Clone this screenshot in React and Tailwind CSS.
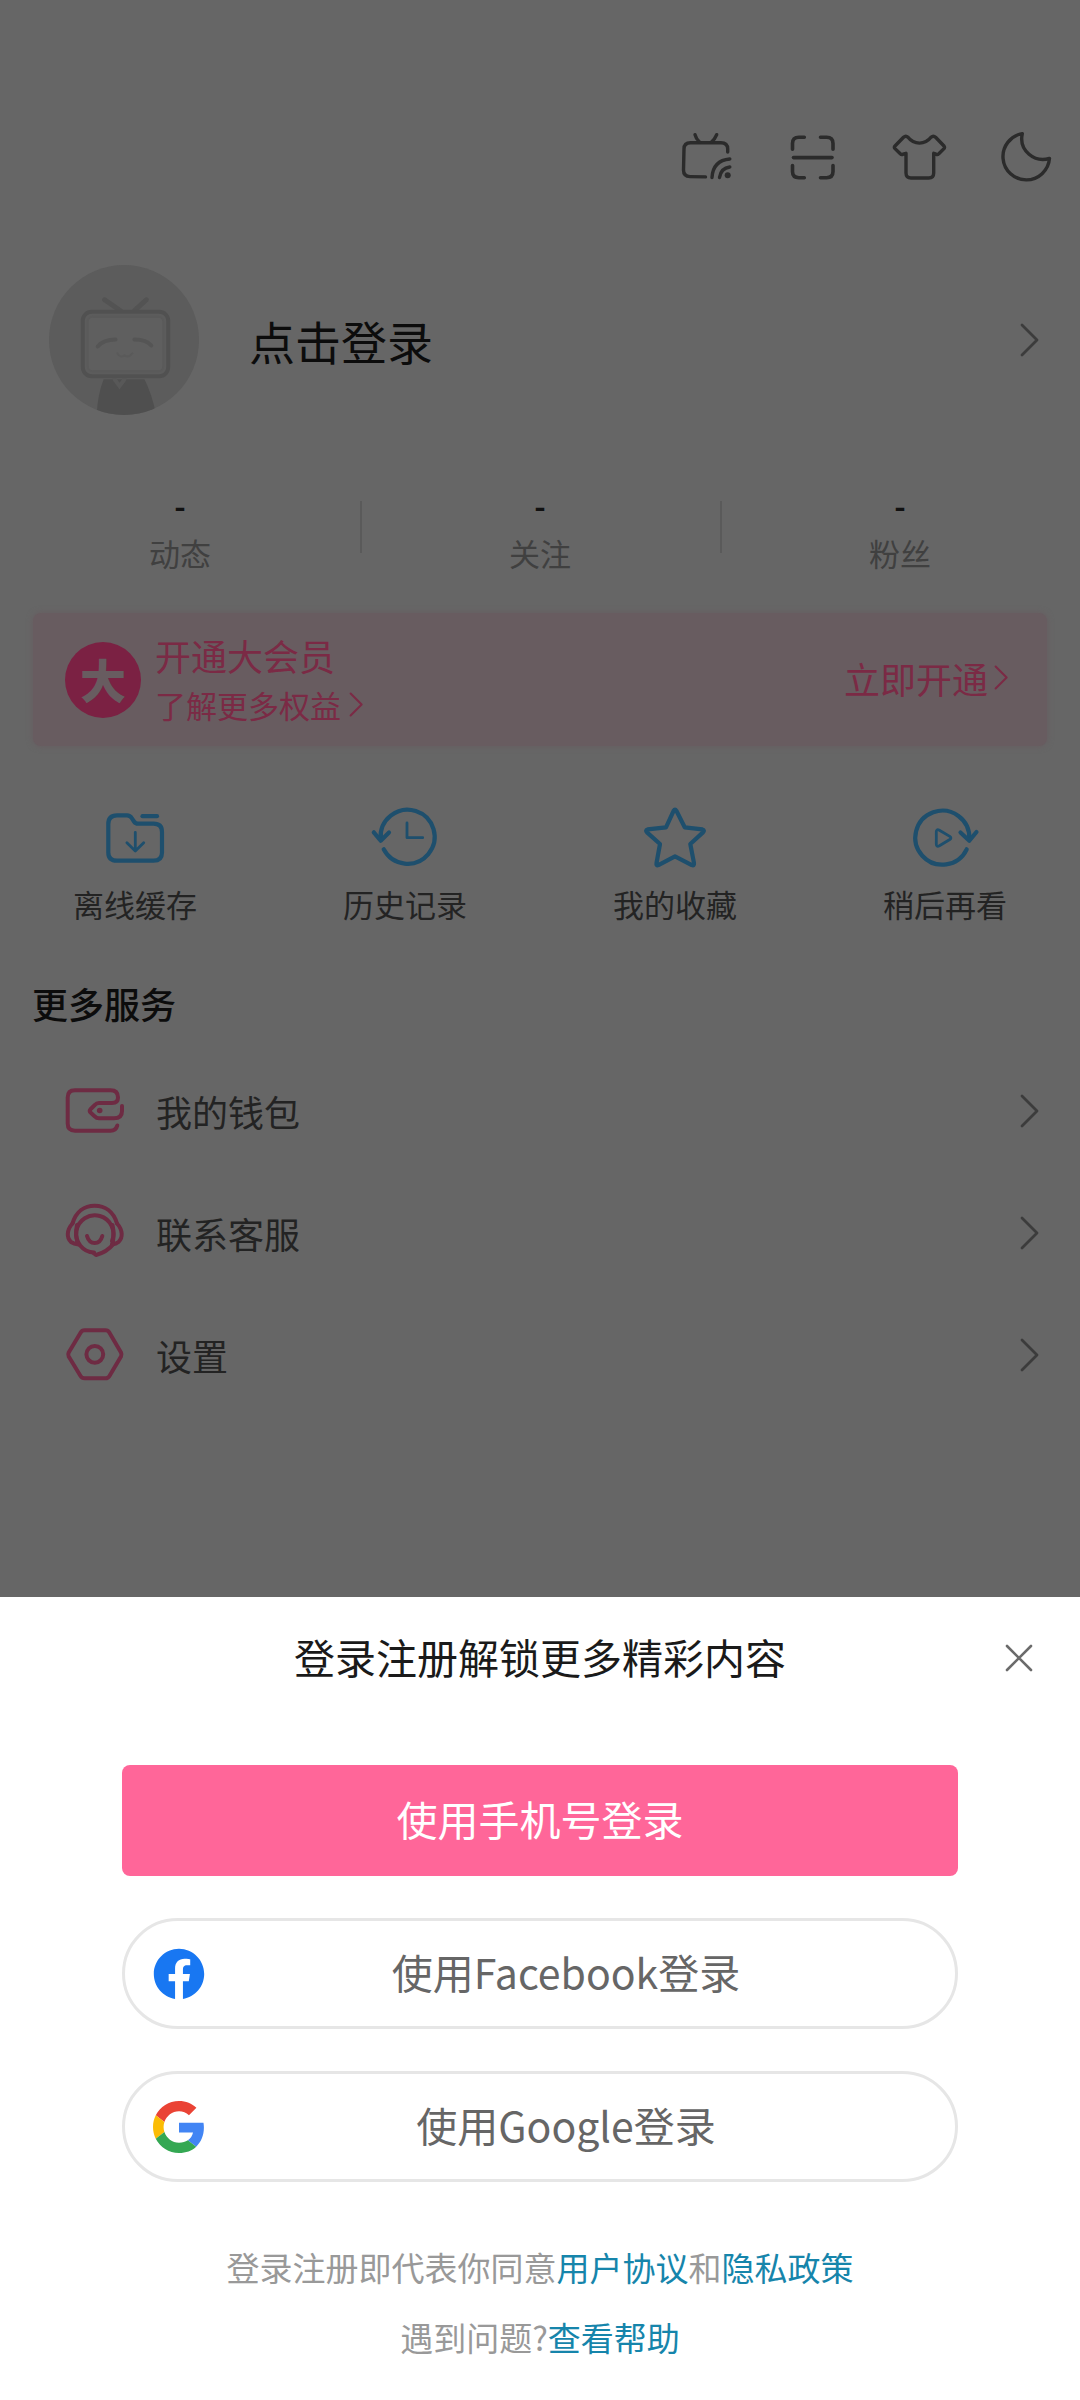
import React from 'react';
import { FaFacebook } from 'react-icons/fa';

const TvCastIcon = () => (
    <svg className="w-14 h-14" viewBox="0 0 56 56" fill="none" stroke="currentColor" strokeWidth="3.4" strokeLinecap="round" strokeLinejoin="round">
        <path d="M48.7 23V20Q48.7 13.7 42 13.7H11.5Q5 13.7 5 20L4.5 41Q4.5 47.4 11 47.6L26.5 47.9" />
        <path d="M16 5.7Q17 10 20.5 13M37.7 5.7Q36 10 32.5 13" />
        <path d="M50.8 30Q34 31.5 33 48.5M50.8 38Q42 39 40.5 48.5" />
        <circle cx="48.7" cy="46.3" r="3" fill="currentColor" stroke="none" />
    </svg>
);

const ScanIcon = () => (
    <svg className="w-14 h-14" viewBox="0 0 56 56" fill="none" stroke="currentColor" strokeWidth="3.6" strokeLinecap="round">
        <path d="M19.3 8.3H14Q7.5 8.3 7.5 14.5V20.3M35.5 8.3H41.5Q48 8.3 48 14.5V20.3" />
        <path d="M19.3 48.7H14Q7.5 48.7 7.5 42.5V36.5M35.5 48.7H41.5Q48 48.7 48 42.5V36.5" />
        <path d="M8.5 28.6H47" />
    </svg>
);

const ShirtIcon = () => (
    <svg className="w-14 h-14" viewBox="0 0 56 56" fill="none" stroke="currentColor" strokeWidth="3.4" strokeLinecap="round" strokeLinejoin="round">
        <path d="M12.5 8.3Q14.8 6.2 17 8.3C23 16 34 16 40 8.3Q42.3 6.2 44.6 8.3L53 17Q54 18.3 53 19.6L47.8 24.8Q46.5 26 45 25.2L42.7 24.3V44Q42.7 49 37.7 49H20Q15 49 15 44V24.3L12 25.2Q10.5 26 9.3 24.8L4 19.6Q2.8 18.3 4 17Z" />
    </svg>
);

const MoonIcon = () => (
    <svg className="w-14 h-14" viewBox="0 0 56 56" fill="none" stroke="currentColor" strokeWidth="3.4" strokeLinejoin="round">
        <path d="M25.3 4.6A23.3 23.3 0 1 0 52.5 29.4C38 34 21.5 22 25.3 4.6Z" />
    </svg>
);

const Avatar = () => (
    <svg className="w-[150px] h-[150px] rounded-full bg-[#5c5c5c]" viewBox="0 0 151 151" fill="none" strokeLinecap="round">
        <path d="M55 115Q49 130 48 151H108Q103 128 96 115Z" fill="#4f4f4f" />
        <path d="M66 115L71 122L76 115" stroke="#585858" strokeWidth="4" />
        <path d="M56 35L72 46M98 35L86 46" stroke="#535353" strokeWidth="5" />
        <rect x="34" y="47" width="86" height="65" rx="9" fill="#5c5c5c" stroke="#515151" strokeWidth="4" />
        <rect x="39" y="52" width="76" height="55" rx="5" fill="#5f5f5f" stroke="#5a5a5a" strokeWidth="2" />
        <path d="M49 82Q55 75 67 75M86 75Q98 75 103 81" stroke="#555555" strokeWidth="4" />
        <path d="M69 89Q72 94 76 91Q80 94 84 89" stroke="#5a5a5a" strokeWidth="2" />
    </svg>
);

const FolderIcon = () => (
    <svg className="w-16 h-16" viewBox="0 0 64 64" fill="none" stroke="currentColor" strokeWidth="4.2" strokeLinecap="round" strokeLinejoin="round">
        <path d="M14 9.3H24Q27 9.3 28.7 12L31 15.5Q32.5 17.7 35 17.7H50.5Q59 17.7 59 26V46.5Q59 54.7 50.5 54.7H14Q5.3 54.7 5.3 46.5V18Q5.3 9.3 14 9.3Z" />
        <path d="M39.5 10.2H54" />
        <path d="M32.3 26.3V44.5M23.9 36.7L32.3 45L40.7 36.7" strokeWidth="2.8" />
    </svg>
);

const HistoryIcon = () => (
    <svg className="w-16 h-16 overflow-visible" viewBox="0 0 64 64" fill="none" stroke="currentColor" strokeWidth="4.2" strokeLinecap="round" strokeLinejoin="round">
        <path d="M7.7 33A27 27 0 1 1 10.7 43.3" />
        <path d="M0.8 26.3L7.7 34.7L16 26.5" />
        <path d="M34 17V31.7H49.7" strokeWidth="2.8" />
    </svg>
);

const StarIcon = () => (
    <svg className="w-16 h-16" viewBox="0 0 64 64" fill="none" stroke="currentColor" strokeWidth="4.2" strokeLinejoin="round">
        <path d="M30.6 4.8Q32 2.4 33.4 4.8L41.7 21.3L59.4 23.4Q62 24.2 60 26.4L47.3 38L51 57.2Q51.3 60 48.8 59.1L32 50.3L15.4 59.1Q13 60 13.5 57.2L17 38L4 26.4Q2 24.2 4.6 23.4L23 21.3Z" />
    </svg>
);

const WatchLaterIcon = () => (
    <svg className="w-16 h-16 overflow-visible" viewBox="0 0 64 64" fill="none" stroke="currentColor" strokeWidth="4.2" strokeLinecap="round" strokeLinejoin="round">
        <path d="M56.3 33A27 27 0 1 0 53.7 43.3" />
        <path d="M47.5 26.5L56.3 34.7L63.5 26" />
        <path d="M23.3 26Q23.3 22.6 26.4 24.2L36.8 30.4Q39 32 36.8 33.5L26.4 39.8Q23.3 41.4 23.3 38Z" strokeWidth="2.8" />
    </svg>
);

const WalletIcon = () => (
    <svg className="w-[60px] h-[60px]" viewBox="0 0 60 60" fill="none" stroke="currentColor" strokeWidth="4" strokeLinecap="round" strokeLinejoin="round">
        <path d="M52.3 44.5Q51 49.7 45.5 49.7H10Q2.7 49.7 2.7 42.5V16.5Q2.7 9.3 10 9.3H45.5Q53 9.3 53 16.5Q53 22 47 22H34Q31.5 22 29.8 24L25.5 28.2Q24 30 25.5 31.6L29.8 35.4Q31.5 37.3 34 37.3H49Q57 37.3 57 30V25" />
        <circle cx="34.7" cy="29.5" r="2.8" fill="currentColor" stroke="none" />
    </svg>
);

const SupportIcon = () => (
    <svg className="w-[60px] h-[60px]" viewBox="0 0 60 60" fill="none" stroke="currentColor" strokeWidth="4" strokeLinecap="round" strokeLinejoin="round">
        <path d="M29 49.5A18.6 18.6 0 1 1 47 38" />
        <path d="M7.5 20.5C11 8.5 19.5 2.7 29.7 2.7S48.5 8.5 52 20.5" />
        <path d="M7.5 20.5C1.5 27 1.5 35 6 39Q9 41 13.5 41.5Q9.5 33 12 22" />
        <path d="M52 20.5C58 27 58 35 53.5 39Q51 41 47 41.5Q50 33 47.5 22" />
        <path d="M48 41.5Q42 49 31 52L28.5 50" />
        <path d="M22 33Q24 40 29.7 40T37.3 33" />
    </svg>
);

const SettingsIcon = () => (
    <svg className="w-[60px] h-[60px]" viewBox="0 0 60 60" fill="none" stroke="currentColor" strokeWidth="4" strokeLinejoin="round">
        <path d="M19.5 5.3H40.5Q43 5.3 44.3 7.5L56 27.5Q57 29.5 56 31.5L44.3 51.2Q43 53.3 40.5 53.3H19.5Q17 53.3 15.7 51.2L3.7 31.5Q2.7 29.5 3.7 27.5L15.7 7.5Q17 5.3 19.5 5.3Z" />
        <circle cx="29.8" cy="29.3" r="8.4" />
    </svg>
);

const Chevron = ({ className }) => (
    <svg className={className} viewBox="0 0 20 34" fill="none" stroke="currentColor" strokeWidth="2.8" strokeLinecap="round" strokeLinejoin="round">
        <path d="M2 2L17 17L2 32" />
    </svg>
);

const GoogleIcon = () => (
    <svg className="w-[52px] h-[52px] shrink-0" viewBox="0 0 48 48">
        <path fill="#EA4335" d="M24 9.5c3.54 0 6.71 1.22 9.21 3.6l6.85-6.85C35.9 2.38 30.47 0 24 0 14.62 0 6.51 5.38 2.56 13.22l7.98 6.19C12.43 13.72 17.74 9.5 24 9.5z" />
        <path fill="#4285F4" d="M46.98 24.55c0-1.57-.15-3.09-.38-4.55H24v9.02h12.94c-.58 2.96-2.26 5.48-4.78 7.18l7.73 6c4.51-4.18 7.09-10.36 7.09-17.65z" />
        <path fill="#FBBC05" d="M10.53 28.59c-.48-1.45-.76-2.99-.76-4.59s.27-3.14.76-4.59l-7.98-6.19C.92 16.46 0 20.12 0 24c0 3.88.92 7.54 2.56 10.78l7.97-6.19z" />
        <path fill="#34A853" d="M24 48c6.48 0 11.93-2.13 15.89-5.81l-7.73-6c-2.15 1.45-4.92 2.3-8.16 2.3-6.26 0-11.57-4.22-13.47-9.91l-7.98 6.19C6.51 42.62 14.62 48 24 48z" />
    </svg>
);

const topActions = [
    { label: '投屏', Icon: TvCastIcon },
    { label: '扫一扫', Icon: ScanIcon },
    { label: '主题', Icon: ShirtIcon },
    { label: '夜间模式', Icon: MoonIcon }
];

const stats = ['动态', '关注', '粉丝'];

const shortcuts = [
    { label: '离线缓存', Icon: FolderIcon },
    { label: '历史记录', Icon: HistoryIcon },
    { label: '我的收藏', Icon: StarIcon },
    { label: '稍后再看', Icon: WatchLaterIcon }
];

const services = [
    { label: '我的钱包', Icon: WalletIcon },
    { label: '联系客服', Icon: SupportIcon },
    { label: '设置', Icon: SettingsIcon }
];

const App = () => {
    return (
        <div className="min-h-screen flex flex-col bg-[#666666] font-['Noto_Sans_CJK_SC',sans-serif]">
            <main className="flex-1 pb-40">
                {/* Top actions */}
                <header className="flex justify-end gap-[50px] pt-[129px] pr-[27px] text-[#2b2b2b]">
                    {topActions.map(({ label, Icon }) => (
                        <button key={label} type="button" aria-label={label}>
                            <Icon />
                        </button>
                    ))}
                </header>

                {/* Profile */}
                <button type="button" className="mt-20 w-full flex items-center pl-[49px] pr-10 text-left">
                    <Avatar />
                    <span className="flex-1 ml-[50px] text-[46px] leading-[60px] text-[#0c0c0c]">点击登录</span>
                    <Chevron className="w-5 h-[34px] text-[#3c3c3c]" />
                </button>

                {/* Stats */}
                <div className="mt-[66px] grid grid-cols-3">
                    {stats.map((label, i) => (
                        <button key={label} type="button" className="relative flex flex-col items-center">
                            <span className="text-[31px] leading-[48px] font-bold text-[#111111]">-</span>
                            <span className="text-[31px] leading-[48px] text-[#404040]">{label}</span>
                            {i > 0 && <span className="absolute left-0 top-5 w-0.5 h-[52px] bg-[#5a5a5a]" />}
                        </button>
                    ))}
                </div>

                {/* VIP banner */}
                <div className="mt-9 mx-[33px] h-[133px] flex items-center pl-8 pr-[38px] rounded-lg bg-[#685c60] shadow-[0_0_6px_#685c60] text-[#7b2a45]">
                    <div className="w-[76px] h-[76px] pb-1 rounded-full bg-[#7b2143] flex items-center justify-center text-[46px] leading-[46px] font-black text-[#685c60]">
                        大
                    </div>
                    <div className="flex-1 ml-[14px] pb-0.5">
                        <div className="text-[36px] leading-[52px]">开通大会员</div>
                        <a href="#" className="flex items-center gap-2 text-[31px] leading-[48px]">
                            了解更多权益
                            <Chevron className="w-[15px] h-[25px]" />
                        </a>
                    </div>
                    <button type="button" className="flex items-center gap-1.5 pb-1 text-[36px] leading-[52px]">
                        立即开通
                        <Chevron className="w-[15px] h-[25px]" />
                    </button>
                </div>

                {/* Shortcuts */}
                <nav className="mt-[60px] grid grid-cols-4">
                    {shortcuts.map(({ label, Icon }) => (
                        <button key={label} type="button" className="flex flex-col items-center gap-3 text-[#1e4f6d]">
                            <Icon />
                            <span className="text-[31px] leading-[44px] text-[#232323]">{label}</span>
                        </button>
                    ))}
                </nav>

                {/* More services */}
                <h2 className="mt-[50px] px-8 text-[36px] leading-[54px] font-medium text-[#0c0c0c]">更多服务</h2>
                <ul className="mt-5">
                    {services.map(({ label, Icon }) => (
                        <li key={label}>
                            <button type="button" className="w-full h-[122px] flex items-center pl-[65px] pr-10 text-left text-[#6e2b43]">
                                <Icon />
                                <span className="flex-1 ml-[31px] text-[36px] leading-[54px] text-[#232323]">{label}</span>
                                <Chevron className="w-5 h-[34px] text-[#3c3c3c]" />
                            </button>
                        </li>
                    ))}
                </ul>
            </main>

            {/* Login sheet */}
            <section className="bg-white pb-[38px]">
                <div className="relative h-[122px] pb-1 flex items-center justify-center">
                    <h1 className="text-[41px] leading-[60px] text-[#1a1a1a]">登录注册解锁更多精彩内容</h1>
                    <button type="button" aria-label="关闭" className="absolute right-9 top-10 w-[50px] h-[42px] flex items-center justify-center text-[#6b6b6b]">
                        <svg className="w-7 h-7" viewBox="0 0 28 28" fill="none" stroke="currentColor" strokeWidth="2.6" strokeLinecap="round">
                            <path d="M2 2L26 26M26 2L2 26" />
                        </svg>
                    </button>
                </div>

                <div className="mt-[46px] mx-[122px] flex flex-col gap-[42px] text-[41px] leading-[60px]">
                    <button type="button" className="h-[111px] pb-1.5 rounded-lg bg-[#ff6699] text-white">
                        使用手机号登录
                    </button>
                    <button type="button" className="h-[111px] flex items-center px-7 rounded-full border-3 border-[#e6e6e6] text-[#666666]">
                        <FaFacebook className="w-[52px] h-[52px] shrink-0 text-[#1877f2]" />
                        <span className="flex-1 pb-1.5">使用Facebook登录</span>
                    </button>
                    <button type="button" className="h-[111px] flex items-center px-7 rounded-full border-3 border-[#e6e6e6] text-[#666666]">
                        <GoogleIcon />
                        <span className="flex-1 pb-1.5">使用Google登录</span>
                    </button>
                </div>

                <div className="mt-[60px] text-center text-[33px] leading-[50px] text-[#999999]">
                    <p>
                        登录注册即代表你同意
                        <a href="#" className="text-[#1685ab]">用户协议</a>
                        和
                        <a href="#" className="text-[#1685ab]">隐私政策</a>
                    </p>
                    <p className="mt-5">
                        遇到问题?
                        <a href="#" className="text-[#1685ab]">查看帮助</a>
                    </p>
                </div>
            </section>
        </div>
    );
};

export default App;
